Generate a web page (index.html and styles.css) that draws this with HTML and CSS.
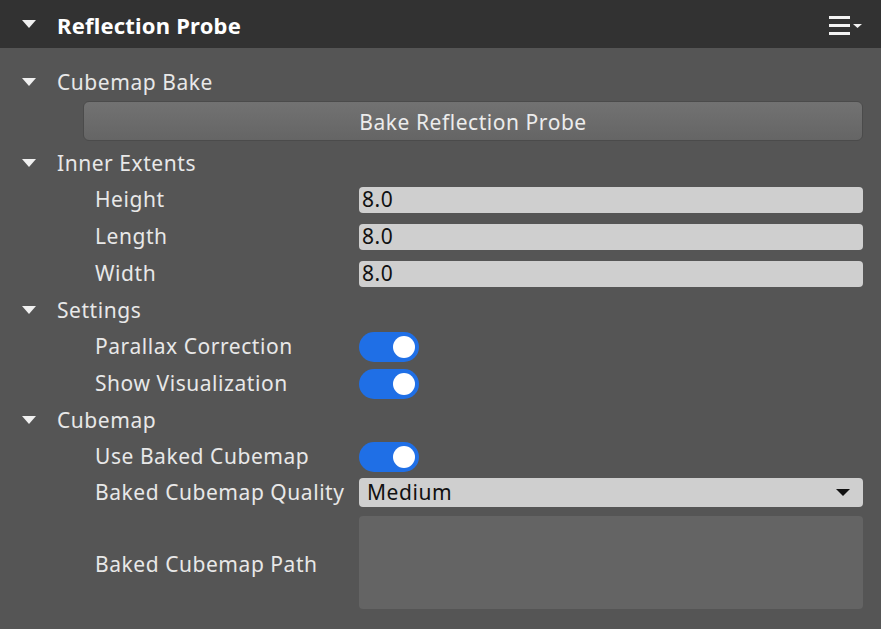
FILE: index.html
```html
<!DOCTYPE html>
<html>
<head>
<meta charset="utf-8">
<link rel="stylesheet" href="styles.css">
</head>
<body>
<div class="panel">
  <div class="header">
    <span class="tri tri-light"></span>
    <span class="title">Reflection Probe</span>
    <span class="menu">
      <svg width="34" height="20" viewBox="0 0 34 20">
        <rect x="0" y="0" width="21" height="3" fill="#f2f2f2"/>
        <rect x="0" y="8" width="21" height="3" fill="#f2f2f2"/>
        <rect x="0" y="16" width="21" height="3" fill="#f2f2f2"/>
        <polygon points="24,8 33,8 28.5,12" fill="#f2f2f2"/>
      </svg>
    </span>
  </div>
  <div class="content">
    <div class="section"><span class="tri tri-light"></span><span class="section-label">Cubemap Bake</span></div>
    <div class="button-row"><div class="btn">Bake Reflection Probe</div></div>

    <div class="section gap-top"><span class="tri tri-light"></span><span class="section-label">Inner Extents</span></div>
    <div class="prop"><span class="label">Height</span><div class="input">8.0</div></div>
    <div class="prop"><span class="label">Length</span><div class="input">8.0</div></div>
    <div class="prop"><span class="label">Width</span><div class="input">8.0</div></div>

    <div class="section"><span class="tri tri-light"></span><span class="section-label">Settings</span></div>
    <div class="prop"><span class="label">Parallax Correction</span><div class="toggle"><span class="knob"></span></div></div>
    <div class="prop"><span class="label">Show Visualization</span><div class="toggle"><span class="knob"></span></div></div>

    <div class="section"><span class="tri tri-light"></span><span class="section-label">Cubemap</span></div>
    <div class="prop"><span class="label">Use Baked Cubemap</span><div class="toggle"><span class="knob"></span></div></div>
    <div class="prop prop-select"><span class="label">Baked Cubemap Quality</span><div class="input select"><span>Medium</span><span class="caret"></span></div></div>
    <div class="prop prop-tall"><span class="label">Baked Cubemap Path</span><div class="textarea"></div></div>
  </div>
</div>
</body>
</html>
```
FILE: styles.css
```css
html, body {
  margin: 0;
  padding: 0;
  background: #555555;
  width: 881px;
  height: 629px;
  overflow: hidden;
}
body {
  font-family: "Noto Sans", "Open Sans", sans-serif;
  font-size: 21px;
  letter-spacing: 0.55px;
  color: #e8e8e8;
}
.header {
  height: 48px;
  background: #323232;
  display: flex;
  align-items: center;
  padding-left: 22px;
  padding-right: 18px;
  box-sizing: border-box;
}
.title {
  font-weight: bold;
  font-size: 22px;
  letter-spacing: 0.2px;
  color: #ffffff;
  margin-left: 21px;
  flex: 1;
  line-height: 1;
  position: relative;
  top: 1px;
}
.menu {
  display: flex;
  margin-top: 4px;
}
.tri {
  width: 0;
  height: 0;
  border-left: 7px solid transparent;
  border-right: 7px solid transparent;
  border-top: 8px solid #f0f0f0;
  flex: none;
}
.content {
  padding-top: 16px;
  padding-right: 18px;
}
.section {
  height: 36px;
  display: flex;
  align-items: center;
  padding-left: 22px;
}
.section-label {
  margin-left: 21px;
}
.button-row {
  padding-left: 83px;
  margin-top: 1px;
  margin-bottom: 4px;
}
.btn {
  height: 40px;
  box-sizing: border-box;
  border: 1px solid #4b4b4b;
  border-radius: 6px;
  background: linear-gradient(#727272, #656565);
  display: flex;
  align-items: center;
  justify-content: center;
  color: #ececec;
  padding-top: 2px;
}
.prop {
  height: 37px;
  display: grid;
  grid-template-columns: 264px 1fr;
  align-items: center;
  padding-left: 95px;
}
.prop-select {
  height: 35px;
}
.label {
  position: relative;
  top: -1px;
}
.input {
  height: 26px;
  box-sizing: border-box;
  background: #cfcfcf;
  border-radius: 4px;
  color: #111111;
  padding-left: 3px;
  display: flex;
  align-items: center;
  line-height: 1;
}
.select {
  height: 29px;
  justify-content: space-between;
  padding-left: 8px;
  padding-right: 13px;
}
.caret {
  width: 0;
  height: 0;
  border-left: 7px solid transparent;
  border-right: 7px solid transparent;
  border-top: 7px solid #111111;
}
.toggle {
  width: 60px;
  height: 30px;
  border-radius: 15px;
  background: #1f6fe6;
  position: relative;
}
.knob {
  position: absolute;
  right: 4px;
  top: 4px;
  width: 22px;
  height: 22px;
  border-radius: 50%;
  background: #ffffff;
}
.prop-tall {
  height: 93px;
  margin-top: 6px;
}
.prop-tall .label {
  top: 1px;
}
.textarea {
  height: 93px;
  background: #646464;
  border-radius: 4px;
}
```
